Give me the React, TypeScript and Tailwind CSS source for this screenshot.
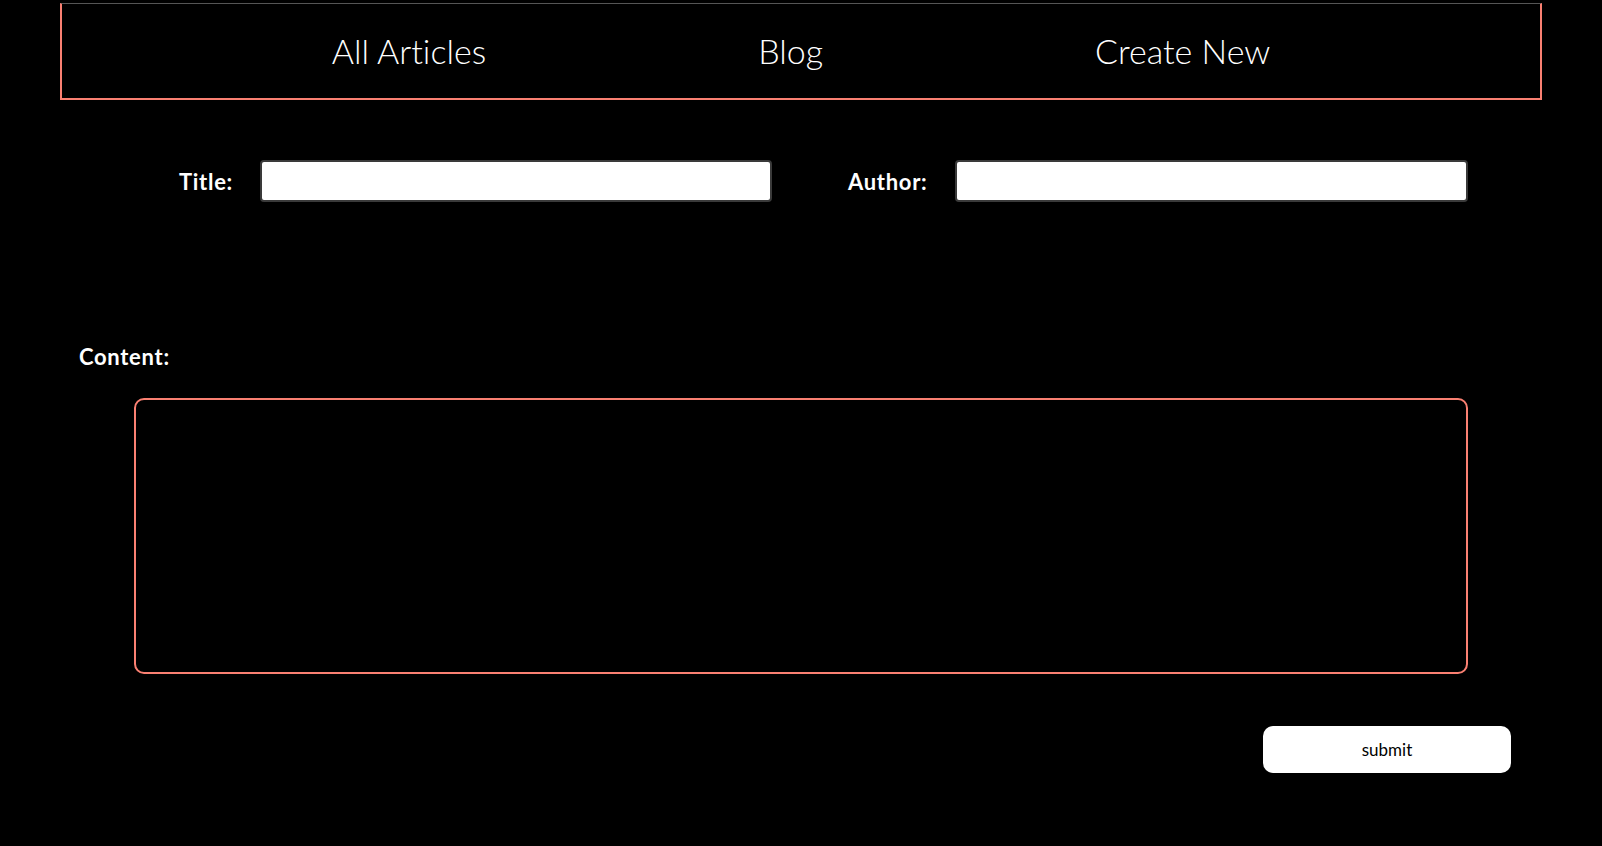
import React from 'react';

const navItems = ['All Articles', 'Blog', 'Create New'];

export default function App() {
  return (
    <div className="min-h-[846px] bg-black pt-[3px] font-['Lato','Liberation_Sans',sans-serif] text-white [font-variant-ligatures:none]">
      <nav className="mx-[60px] flex h-[97px] items-center justify-center gap-[272px] border-2 border-t border-[#fa8072] border-t-[#555]">
        {navItems.map((item) => (
          <a key={item} href="#" className="text-[34px] font-light leading-none text-white">
            {item}
          </a>
        ))}
      </nav>

      <form className="flex flex-col" onSubmit={(e) => e.preventDefault()}>
        <div className="mt-[60px] flex items-center pl-[179px]">
          <label className="w-[81px] text-[22px] font-bold tracking-[0.7px]">Title:</label>
          <input
            type="text"
            className="h-[42px] w-[512px] rounded-[4px] border-2 border-[#3a3a3a] bg-white px-2 text-black outline-none"
          />
          <label className="ml-[76px] w-[107px] text-[22px] font-bold tracking-[0.7px]">Author:</label>
          <input
            type="text"
            className="h-[42px] w-[513px] rounded-[4px] border-2 border-[#3a3a3a] bg-white px-2 text-black outline-none"
          />
        </div>

        <label className="mt-[142px] pl-[79px] text-[22px] font-bold leading-[26px] tracking-[0.7px]">Content:</label>

        <div className="mt-[28px] pl-[134px]">
          <textarea className="block h-[276px] w-[1334px] resize-none rounded-[10px] border-2 border-[#fa8072] bg-transparent p-3 text-white outline-none" />
        </div>

        <div className="mt-[52px] flex justify-end pr-[91px]">
          <button
            type="submit"
            className="h-[47px] w-[248px] rounded-[10px] bg-white text-[17px] text-black"
          >
            submit
          </button>
        </div>
      </form>
    </div>
  );
}
